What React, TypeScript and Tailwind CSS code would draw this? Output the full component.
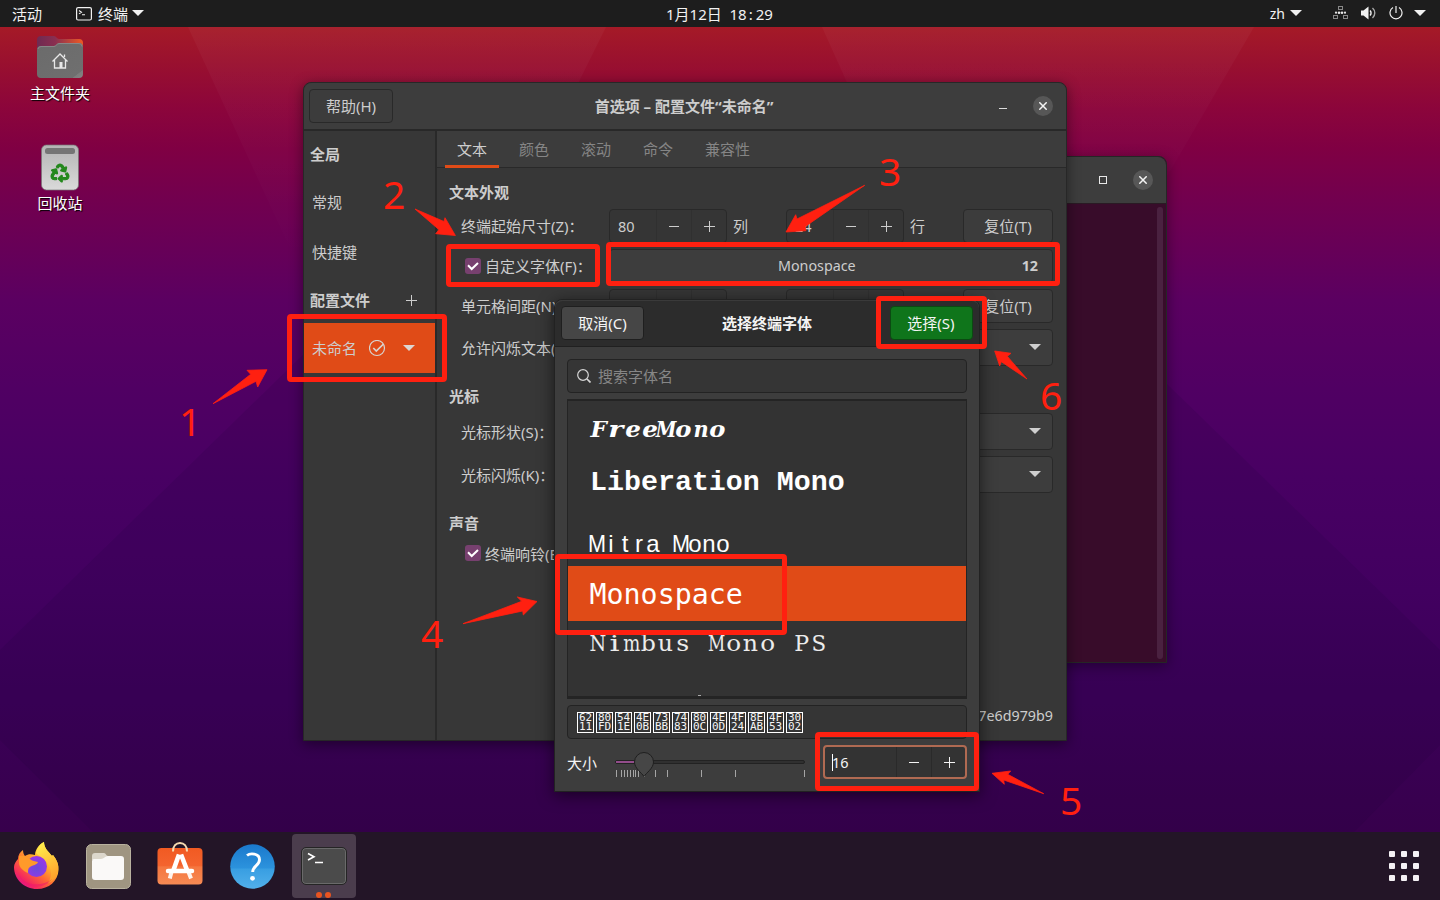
import React from "react";
import { FaRecycle } from "react-icons/fa";

const RED = "#ff2010";

function Caret({ color = "#f2f2f2" }: { color?: string }) {
  return (
    <svg width="12" height="6" viewBox="0 0 12 6" className="block shrink-0">
      <path d="M0 0h12L6 6z" fill={color} />
    </svg>
  );
}

function Wallpaper() {
  return (
    <svg width="1440" height="900" className="absolute left-0 top-0 block">
      <defs>
        <linearGradient id="wall" x1="0" y1="27" x2="0" y2="832" gradientUnits="userSpaceOnUse">
          <stop offset="0" stopColor="#a51a27" />
          <stop offset="0.05" stopColor="#980f30" />
          <stop offset="0.1" stopColor="#8c053b" />
          <stop offset="0.15" stopColor="#800043" />
          <stop offset="0.21" stopColor="#73004e" />
          <stop offset="0.27" stopColor="#680057" />
          <stop offset="0.34" stopColor="#5b0061" />
          <stop offset="0.45" stopColor="#500063" />
          <stop offset="0.56" stopColor="#480063" />
          <stop offset="0.7" stopColor="#420060" />
          <stop offset="0.84" stopColor="#3b0058" />
          <stop offset="1" stopColor="#37004c" />
        </linearGradient>
        <linearGradient id="glow" x1="0" y1="0" x2="0" y2="1">
          <stop offset="0" stopColor="#fff" stopOpacity="0.035" />
          <stop offset="1" stopColor="#fff" stopOpacity="0" />
        </linearGradient>
      </defs>
      <rect width="1440" height="900" fill="url(#wall)" />
      <path d="M188 27H606L540 160 300 270z" fill="url(#glow)" />
      <path d="M822 27H1254L1130 240 900 200z" fill="url(#glow)" />
      <path d="M0 650L310 348H1130L1440 650V745L1354 832H93L0 740z" fill="#100030" opacity="0.1" />
    </svg>
  );
}

function TopBar() {
  return (
    <header className="relative flex h-[27px] items-center justify-between bg-[#1d1d1d] pl-[12px] pr-[14px] text-[15px] leading-[27px] text-[#f2f2f2]">
      <div className="flex items-center">
        <span className="w-[64px] pt-px">活动</span>
        <svg width="16" height="14" viewBox="0 0 16 14" fill="none" stroke="#f2f2f2">
          <rect x="0.6" y="0.6" width="14.8" height="12.4" rx="1.5" strokeWidth="1.2" />
          <path d="M3 3.5l2.5 1.7L3 6.9M6 7.7h3" strokeWidth="1.1" />
        </svg>
        <span className="ml-[6px] mr-[4px] pt-px">终端</span>
        <span className="-mt-px">
          <Caret />
        </span>
      </div>
      <div className="flex items-center">
        <span className="mr-[5px] text-[14px]">zh</span>
        <span className="-mt-px mr-px">
          <Caret />
        </span>
        <svg className="-mt-px ml-[30px]" width="16" height="14" viewBox="0 0 16 14" fill="none">
          <g stroke="#888" strokeWidth="1">
            <rect x="5.5" y="0.5" width="4" height="3" />
            <rect x="0.5" y="9.5" width="4" height="3" />
            <rect x="10.5" y="9.5" width="4" height="3" />
          </g>
          <g fill="#e8e8e8">
            <circle cx="3" cy="6.7" r="1.1" />
            <circle cx="6" cy="6.7" r="1.3" />
            <circle cx="9" cy="6.7" r="1.3" />
            <circle cx="12" cy="6.7" r="1.1" />
          </g>
        </svg>
        <svg className="-mt-px ml-[12px]" width="16" height="14" viewBox="0 0 16 14" fill="none">
          <path d="M0 4.5h2.5L7.5 0.500v13L2.500 9.5H0z" fill="#f2f2f2" />
          <path d="M9 4.500a3.500 3.500 0 010 5" stroke="#f2f2f2" strokeWidth="1.400" />
          <path d="M11.500 2a6.600 6.600 0 010 10" stroke="#aaa" strokeWidth="1.400" />
        </svg>
        <svg className="-mt-[2px] ml-[12px] mr-px" width="14" height="14" viewBox="0 0 14 14" fill="none" stroke="#f2f2f2" strokeWidth="1.2">
          <path d="M4 1.6a6 6 0 106 0M7 0v7" />
        </svg>
        <span className="-mt-px ml-[10px]">
          <Caret />
        </span>
      </div>
      <span className="absolute left-[666px] top-px whitespace-pre text-[15px]">
        1月12日  18<span className="ml-[2px] mr-[3px]">:</span>29
      </span>
    </header>
  );
}

function DesktopIcons() {
  return (
    <div className="absolute left-0 top-[27px] w-[120px] text-[15px] leading-[20px] text-white [text-shadow:1px_1px_1px_#000]">
      <div className="flex h-[110px] flex-col items-center pt-[9px]">
        <svg width="46" height="43" viewBox="0 0 46 43">
          <defs>
            <linearGradient id="fold" x1="0" x2="1">
              <stop offset="0" stopColor="#6e2a52" />
              <stop offset="0.4" stopColor="#8a2f50" />
              <stop offset="1" stopColor="#ee5a24" />
            </linearGradient>
            <linearGradient id="foldf" x1="0" y1="0" x2="1" y2="1">
              <stop offset="0" stopColor="#6b6b6b" />
              <stop offset="0.88" stopColor="#6f6f6f" />
              <stop offset="0.89" stopColor="#7c7c7c" />
              <stop offset="1" stopColor="#858585" />
            </linearGradient>
          </defs>
          <path d="M0 14V4a4 4 0 014-4h13c2 0 3 3 5 3h20a4 4 0 014 4v9z" fill="url(#fold)" />
          <path d="M0 14a4 4 0 014-4h13c2 0 3-3 5-3h20a4 4 0 014 4v27a4 4 0 01-4 4H4a4 4 0 01-4-4z" fill="url(#foldf)" />
          <path d="M1 13a3 3 0 013-2.500h13c2 0 3-3 5-3h20a3 3 0 013 3" fill="none" stroke="#8e8e8e" strokeWidth="0.8" />
          <path d="M15.500 25.500l7.500-7.500 7.500 7.500M17.500 24v8h11v-8M27.500 21v-2.500" fill="none" stroke="#e8e8e8" strokeWidth="1.300" />
          <rect x="22.500" y="26" width="3" height="6" fill="#e8e8e8" />
        </svg>
        <span className="mt-[4px]">主文件夹</span>
      </div>
      <div className="flex flex-col items-center pt-[7px]">
        <div className="relative">
          <svg width="38" height="47" viewBox="0 0 38 47" className="block">
            <defs>
              <linearGradient id="bin" x1="0" y1="0" x2="0" y2="1">
                <stop offset="0" stopColor="#b4b4b4" />
                <stop offset="1" stopColor="#dadada" />
              </linearGradient>
            </defs>
            <rect x="0.500" y="1" width="37" height="45" rx="5" fill="url(#bin)" stroke="#777" strokeWidth="0.700" />
            <rect x="4" y="4" width="30" height="6" rx="2.500" fill="#757575" />
          </svg>
          <FaRecycle size={18} color="#24881d" stroke="#24881d" strokeWidth={34} className="absolute left-[10px] top-[20px] overflow-visible" />
        </div>
        <span className="mt-[2px]">回收站</span>
      </div>
    </div>
  );
}

function CloseIcon() {
  return (
    <span className="flex h-5 w-5 items-center justify-center rounded-full bg-[#575757]">
      <svg width="8" height="8" viewBox="0 0 8 8" stroke="#f4f4f4" strokeWidth="1.5">
        <path d="M0.300 0.300l7.400 7.400M7.700 0.300L0.300 7.700" />
      </svg>
    </span>
  );
}

function TerminalWindow() {
  return (
    <div className="absolute left-[440px] top-[156px] flex h-[507px] w-[727px] flex-col rounded-t-lg border border-[#262626] bg-[#380c2a] shadow-[0_3px_14px_rgba(0,0,0,0.4)]">
      <div className="flex h-[47px] shrink-0 items-center justify-end gap-[26px] rounded-t-lg border-b border-[#2a1a24] bg-[#3d3d3d] pr-[13px]">
        <span className="h-2 w-2 border border-[#e8e8e8]" />
        <CloseIcon />
      </div>
      <div className="flex flex-1 justify-end p-[3px]">
        <span className="h-[452px] w-[6px] rounded-full bg-[#4a2140]" />
      </div>
    </div>
  );
}

function Minus() {
  return <span className="h-px w-[10px] bg-current" />;
}

function Plus() {
  return (
    <svg width="11" height="11" viewBox="0 0 11 11" stroke="currentColor" className="block">
      <path d="M0 5.500h11M5.500 0v11" />
    </svg>
  );
}

function Spin({ value }: { value: string }) {
  return (
    <div className="flex h-[34px] w-[118px] shrink-0 rounded border border-[#292929] bg-[#353535]">
      <span className="flex-1 pl-2 text-[14.500px] leading-[32px]">{value}</span>
      <span className="flex w-[35px] items-center justify-center border-l border-[#303030]">
        <Minus />
      </span>
      <span className="flex w-[35px] items-center justify-center border-l border-[#303030]">
        <Plus />
      </span>
    </div>
  );
}

function SizeRow({ label, a, b, ua, ub }: { label: string; a: string; b: string; ua: string; ub: string }) {
  return (
    <div className="mb-[6px] flex h-[34px] items-center pl-3">
      <span className="w-[148px] shrink-0">{label}</span>
      <Spin value={a} />
      <span className="w-[59px] shrink-0 pl-[6px]">{ua}</span>
      <Spin value={b} />
      <span className="w-[59px] shrink-0 pl-[6px]">{ub}</span>
      <span className="flex h-[34px] w-[90px] shrink-0 items-center justify-center rounded border border-[#292929] bg-[#3c3c3c]">复位(T)</span>
    </div>
  );
}

function ComboRow({ label }: { label: string }) {
  return (
    <div className="flex h-[37px] items-center pl-3">
      <span className="w-[148px] shrink-0">{label}</span>
      <span className="flex h-[37px] w-[444px] items-center justify-end rounded border border-[#292929] bg-[#3d3d3d] pb-px pr-[11px]">
        <Caret color="#cfcfcf" />
      </span>
    </div>
  );
}

function Check() {
  return (
    <span className="mr-1 flex h-4 w-4 items-center justify-center rounded-[3px] bg-[#77406f]">
      <svg width="12" height="10" viewBox="0 0 12 10" fill="none" stroke="#fff" strokeWidth="2">
        <path d="M1 4.300l3.700 3.700L11 2" />
      </svg>
    </span>
  );
}

function PreferencesWindow() {
  const tabs = ["文本", "颜色", "滚动", "命令", "兼容性"];
  return (
    <div className="absolute left-[303px] top-[82px] flex h-[659px] w-[764px] flex-col rounded-t-lg border border-[#272727] bg-[#373737] text-[15px] leading-[22px] text-[#cdcdcd] shadow-[0_3px_14px_rgba(0,0,0,0.45)]">
      <div className="relative flex h-[48px] shrink-0 items-center justify-between rounded-t-lg border-b-2 border-[#282828] bg-[#3d3d3d] pl-[5px] pr-[13px]">
        <span className="flex h-[34px] w-[84px] items-center justify-center rounded border border-[#292929] bg-[#3c3c3c]">帮助(H)</span>
        <div className="flex items-center gap-[26px]">
          <span className="mt-[5px] h-px w-2 bg-[#dcdcdc]" />
          <CloseIcon />
        </div>
        <span className="absolute left-0 right-[2px] top-[12px] text-center font-bold">首选项 – 配置文件“未命名”</span>
      </div>
      <div className="flex min-h-0 flex-1">
        <aside className="flex w-[133px] shrink-0 flex-col border-r-2 border-[#292929]">
          <span className="mt-[12px] pl-[6px] font-bold">全局</span>
          <span className="mt-[26px] pl-[8px]">常规</span>
          <span className="mt-[28px] pl-[8px]">快捷键</span>
          <div className="mt-[26px] flex items-center justify-between pl-[6px] pr-[18px] font-bold">
            配置文件
            <Plus />
          </div>
          <div className="mt-[12px] flex h-[50px] items-center bg-[#e04b17] pl-[8px]">
            <span>未命名</span>
            <svg className="ml-[12px]" width="17" height="17" viewBox="0.500 0.500 17 17" fill="none" stroke="#d8d4d0">
              <circle cx="8.500" cy="8.500" r="7.500" strokeWidth="1.200" />
              <path d="M4.800 8.500l3 3L15 4.500" strokeWidth="1.700" />
            </svg>
            <span className="ml-[17px]">
              <Caret color="#dcd6d2" />
            </span>
          </div>
        </aside>
        <div className="flex flex-1 flex-col overflow-hidden">
          <nav className="flex h-[37px] shrink-0 border-b border-[#292929] bg-[#3c3c3c] pl-2">
            {tabs.map((t, i) => (
              <span
                key={t}
                className={
                  i === 0
                    ? "mr-2 h-[37px] border-b-[3px] border-[#e04b17] px-3 leading-[37px]"
                    : "mr-2 px-3 leading-[37px] text-[#858585]"
                }
              >
                {t}
              </span>
            ))}
          </nav>
          <div className="flex flex-1 flex-col pl-3">
            <h2 className="mb-[4px] mt-[12px] h-[25px] font-bold leading-[25px]">文本外观</h2>
            <SizeRow label="终端起始尺寸(Z)：" a="80" b="24" ua="列" ub="行" />
            <div className="mb-[6px] flex h-[34px] items-center pl-4">
              <div className="flex w-[144px] shrink-0 items-center">
                <Check />
                <span>自定义字体(F)：</span>
              </div>
              <div className="flex h-[34px] w-[444px] items-center rounded border border-[#292929] bg-[#3d3d3d] text-[14.300px]">
                <span className="flex-1 pl-[2px] text-center">Monospace</span>
                <span className="pr-[14px] font-bold">12</span>
              </div>
            </div>
            <SizeRow label="单元格间距(N)：" a="1.0" b="1.0" ua="宽" ub="高" />
            <ComboRow label="允许闪烁文本(B)：" />
            <h2 className="mb-[5px] mt-[18px] h-[24px] font-bold leading-[24px]">光标</h2>
            <ComboRow label="光标形状(S)：" />
            <div className="h-[6px]" />
            <ComboRow label="光标闪烁(K)：" />
            <h2 className="mb-[6px] mt-[18px] h-[24px] font-bold leading-[24px]">声音</h2>
            <div className="flex h-[24px] items-center pl-4">
              <Check />
              <span className="pt-px">终端响铃(B)</span>
            </div>
            <div className="mt-auto pb-[13px] pr-[13px] text-right text-[14.300px]">7e6d979b9</div>
          </div>
        </div>
      </div>
    </div>
  );
}

type Cell = [string, number];

const freeMono: Cell[] = [
  ["F", 1.05], ["r", 1.3], ["e", 1.12], ["e", 1.12], ["M", 0.85], ["o", 1.1], ["n", 0.95], ["o", 1.1],
];

const nimbusMono: Cell[] = [
  ["N", 0.85], ["i", 1.4], ["m", 0.8], ["b", 1.05], ["u", 1.05], ["s", 1.12], ["\u00a0", 1],
  ["M", 0.75], ["o", 1.1], ["n", 1.05], ["o", 1.1], ["\u00a0", 1], ["P", 0.98], ["S", 0.95],
];

function Cells({ cells }: { cells: Cell[] }) {
  return (
    <>
      {cells.map(([ch, sx], i) => (
        <span key={i} className="flex w-[17px] shrink-0 justify-center">
          <span className="block" style={{ transform: `scaleX(${sx})` }}>
            {ch}
          </span>
        </span>
      ))}
    </>
  );
}

function FontDialog() {
  const codes = ["6211", "80FD", "541E", "4E0B", "73BB", "7483", "800C", "4E0D", "4F24", "8EAB", "4F53", "3002"];
  const ticks = [1, 6, 9, 12, 15, 18, 20, 23, 29, 40, 52, 86, 120, 189];
  return (
    <div className="absolute left-[554px] top-[299px] flex h-[493px] w-[426px] flex-col rounded-t-lg border border-[#222] bg-[#3d3d3d] text-[15px] text-[#f4f4f4] shadow-[0_3px_16px_rgba(0,0,0,0.55)]">
      <div className="relative flex h-[47px] shrink-0 items-center justify-between rounded-t-lg border-b border-t border-b-[#202020] border-t-[#3a3a3a] bg-[#2c2c2c] pb-px pl-[6px] pr-[6px]">
        <span className="flex h-[34px] w-[83px] items-center justify-center rounded border border-[#1f1f1f] bg-[#464646]">取消(C)</span>
        <span className="font-bold">选择终端字体</span>
        <span className="flex h-[34px] w-[83px] items-center justify-center rounded border border-[#0b4a12] bg-[#0f751b] pr-px">选择(S)</span>
      </div>
      <div className="flex flex-1 flex-col px-[12px] pt-[12px]">
        <div className="flex h-[34px] shrink-0 items-center rounded border border-[#232323] bg-[#353535] pl-[9px] text-[#868686]">
          <svg width="14" height="14" viewBox="0 0 14 14" fill="none" stroke="#d6d6d6" strokeWidth="1.200">
            <circle cx="6" cy="6" r="5.300" />
            <path d="M10 10l3.500 3.500" strokeWidth="1.700" />
          </svg>
          <span className="ml-[7px]">搜索字体名</span>
        </div>
        <div className="mt-[6px] flex h-[300px] shrink-0 flex-col overflow-hidden border border-b-[3px] border-t-2 border-[#242424] bg-[#333] text-white">
          <div className="flex h-[52px] shrink-0 items-center pl-[22px] pt-[4px] font-['DejaVu_Serif'] text-[22px] font-bold italic">
            <Cells cells={freeMono} />
          </div>
          <div className="flex h-[56px] shrink-0 items-center whitespace-pre pl-[22px] pt-[2px] font-['Liberation_Mono'] text-[28.300px] font-bold">Liberation Mono</div>
          <div className="flex h-[57px] shrink-0 items-end pb-[8px] pl-[22px] font-['Liberation_Sans'] text-[24px] leading-[28px]">
            {"Mitra Mono".split("").map((c, i) => (
              <span key={i} className="flex w-[14px] shrink-0 justify-center whitespace-pre">
                <span className={c === "M" ? "block scale-x-90" : "block"}>{c}</span>
              </span>
            ))}
          </div>
          <div className="flex h-[55px] shrink-0 items-center bg-[#e04b17] pl-[21.500px] pt-[3px] font-['DejaVu_Sans_Mono'] text-[28.300px]">Monospace</div>
          <div className="flex h-[46px] shrink-0 items-center pl-[21px] font-['DejaVu_Serif'] text-[22.500px] text-[#ececec]">
            <Cells cells={nimbusMono} />
          </div>
          <span className="ml-[130px] mt-auto h-px w-[3px] bg-[#aaa]" />
        </div>
        <div className="mt-[6px] flex h-[34px] shrink-0 items-center gap-[2px] rounded border border-[#232323] bg-[#353535] pl-[9px]">
          {codes.map((c) => (
            <span
              key={c}
              className="flex h-[21px] w-[17px] flex-col items-center justify-center border border-white pb-px font-['DejaVu_Sans_Mono'] text-[11px] leading-[9px]"
            >
              <span>{c.slice(0, 2)}</span>
              <span>{c.slice(2)}</span>
            </span>
          ))}
        </div>
        <div className="mt-[6px] flex h-[34px] shrink-0 items-center">
          <span className="w-[48px] pt-[2px]">大小</span>
          <svg width="190" height="34" viewBox="0 0 190 34">
            <rect x="0.500" y="15.500" width="189" height="3" rx="1.500" fill="#303030" stroke="#222" />
            <rect x="1" y="16" width="22" height="2" fill="#924d8b" />
            {ticks.map((t) => (
              <rect key={t} x={t} y="25" width="1" height="7" fill="#a5a5a5" />
            ))}
            <path d="M29 31.500C27 28 19.500 23.500 19.500 17a9.500 9.500 0 0119 0c0 6.500-7.500 11-9.500 14.500z" fill="#464646" stroke="#1f1f1f" />
          </svg>
          <div className="ml-[18px] flex h-[34px] w-[144px] rounded border-2 border-[#b06a52] bg-[#333]">
            <span className="flex flex-1 items-center pl-[7px] text-[14.500px]">
              <span className="h-[17px] w-px bg-white" />
              <span className="-ml-px pt-[2px]">16</span>
            </span>
            <span className="flex w-[35px] items-center justify-center border-l border-[#2a2a2a] pt-px">
              <Minus />
            </span>
            <span className="flex w-[34px] items-center justify-center border-l border-[#2a2a2a] pl-px">
              <Plus />
            </span>
          </div>
        </div>
      </div>
    </div>
  );
}

function Dock() {
  return (
    <footer className="absolute left-0 top-[832px] flex h-[68px] w-[1440px] items-center justify-between bg-[#231527] pr-[21px]">
      <div className="flex h-full items-center">
        <div className="flex w-[72px] justify-center pl-[2px]">
          <svg width="46" height="47" viewBox="0 0 46 47" className="-mt-[2px]">
            <defs>
              <linearGradient id="ff1" x1="0.850" y1="0.100" x2="0.200" y2="0.950">
                <stop offset="0" stopColor="#fff04a" />
                <stop offset="0.350" stopColor="#ffb72a" />
                <stop offset="0.600" stopColor="#ff6a35" />
                <stop offset="0.850" stopColor="#f52b5c" />
                <stop offset="1" stopColor="#e0128a" />
              </linearGradient>
              <radialGradient id="ff2" cx="0.500" cy="0.600" r="0.600">
                <stop offset="0" stopColor="#6a4bdc" />
                <stop offset="1" stopColor="#9a36e8" />
              </radialGradient>
              <linearGradient id="ff3" x1="0" y1="0" x2="0.300" y2="1">
                <stop offset="0" stopColor="#fff44f" />
                <stop offset="1" stopColor="#ffa42c" />
              </linearGradient>
            </defs>
            <path d="M4 17C4 13 6 10 9 8c0 3 1 5 2 6 3-2 6-2 10-1 0-5 4-11 9-13 0 6 4 9 8 14l1-1c4 5 6 10 5.500 15C44 39 35 47 23 47 10 47 0 37 0 25c0-3 2-6 4-8z" fill="url(#ff1)" />
            <path d="M22 11c1-5 4-9 8-11 0 6 4 9 8 14l1-1c4 5 6 10 5 16-1 6-5 10-10 12 4-6 4-13 0-19-3-5-8-7-12-11z" fill="url(#ff3)" />
            <circle cx="22.500" cy="24.500" r="10.500" fill="url(#ff2)" />
            <path d="M5 14c5-.500 9 0 11 3 2 2 5 2 8 3-1 3-5 3-8 5-2 1-2 3-2 6-5-2-9-6-9-10z" fill="#ff9a2a" />
            <path d="M5 33c5 10 22 13 33 4-6 9-26 13-33-4z" fill="#f0146e" opacity="0.500" />
          </svg>
        </div>
        <div className="flex w-[72px] justify-center pl-[2px]">
          <svg width="46" height="45" viewBox="0 0 46 45">
            <rect x="0.500" y="0.500" width="44" height="44" rx="5" fill="#9f9581" stroke="#b9b29f" />
            <path d="M6 12a3 3 0 013-3h9c2 0 2 3 4 3v4H6z" fill="#dcd7cc" />
            <path d="M6 17a2 2 0 012-2h7c3 0 4-3 7-3h13a3 3 0 013 3v18a3 3 0 01-3 3H9a3 3 0 01-3-3z" fill="#faf9f8" />
          </svg>
        </div>
        <div className="flex w-[72px] justify-center">
          <svg width="46" height="44" viewBox="0 0 46 44" className="-mt-[4px]">
            <defs>
              <linearGradient id="bag" x1="0" y1="0" x2="0" y2="1">
                <stop offset="0" stopColor="#f15a22" />
                <stop offset="0.500" stopColor="#f4642f" />
                <stop offset="0.510" stopColor="#f5763f" />
                <stop offset="1" stopColor="#f68a54" />
              </linearGradient>
            </defs>
            <rect x="0.500" y="6" width="45" height="36.500" rx="4" fill="url(#bag)" />
            <path d="M16 9.500C16 4 19 1 23 1S30 4 30 9.500" fill="none" stroke="#f5d9b0" strokeWidth="2" />
            <g fill="none" stroke="#fff">
              <path d="M22 12.500L16.500 28M24 12.500l6 15.500" strokeWidth="4.600" />
              <path d="M11 29h24" strokeWidth="4.500" strokeLinecap="round" />
              <path d="M14.500 30L12.800 36.500M31.500 30l2.500 6.500" strokeWidth="4" opacity="0.9" />
            </g>
          </svg>
        </div>
        <div className="flex w-[72px] justify-center pl-[2px]">
          <svg width="46" height="45" viewBox="0 0 46 45">
            <defs>
              <linearGradient id="help" x1="0" y1="0" x2="0" y2="1">
                <stop offset="0" stopColor="#1a78cc" />
                <stop offset="0.540" stopColor="#2c93dd" />
                <stop offset="0.550" stopColor="#389ee2" />
                <stop offset="1" stopColor="#52b0ea" />
              </linearGradient>
            </defs>
            <circle cx="22.500" cy="22.500" r="22.300" fill="url(#help)" />
            <path d="M17 11.500c3-2.500 12.500-2.500 12.500 4.200 0 5.800-6.800 6-6.800 12.300" fill="none" stroke="#fff" strokeWidth="2.900" />
            <circle cx="22.500" cy="34.300" r="2.400" fill="#fff" />
          </svg>
        </div>
        <div className="ml-[4px] flex h-[64px] w-[64px] flex-col items-center rounded bg-[#4b3d4d] pt-[13px]">
          <div className="h-[38px] w-[46px] rounded-[5px] border border-[#252525] bg-[#4b4b4b] ring-1 ring-[#6a6a6a] ring-inset">
            <svg width="44" height="36" viewBox="0 0 44 36" fill="none" stroke="#fff" strokeWidth="1.600">
              <path d="M6 5.500l6 3.200L6 12M13 14.500h8" />
            </svg>
          </div>
          <div className="mt-[7px] flex gap-[3px] pr-px">
            <span className="h-[6px] w-[6px] rounded-full bg-[#e95420]" />
            <span className="h-[6px] w-[6px] rounded-full bg-[#e95420]" />
          </div>
        </div>
      </div>
      <div className="grid grid-cols-3 gap-[6px]">
        {Array.from({ length: 9 }, (_, i) => (
          <span key={i} className="h-[6px] w-[6px] rounded-[1px] bg-[#f4f0f4]" />
        ))}
      </div>
    </footer>
  );
}

function Annotations() {
  return (
    <div className="pointer-events-none absolute inset-0 text-[39px] leading-[40px] text-[#ff2010]">
      <div className="absolute left-[287px] top-[314px] h-[68px] w-[160px] rounded-[4px] border-5 border-[#ff2010]" />
      <div className="absolute left-[446px] top-[244px] h-[43px] w-[154px] rounded-[4px] border-5 border-[#ff2010]" />
      <div className="absolute left-[606px] top-[242px] h-[44px] w-[454px] rounded-[4px] border-5 border-[#ff2010]" />
      <div className="absolute left-[876px] top-[296px] h-[53px] w-[111px] rounded-[4px] border-5 border-[#ff2010]" />
      <div className="absolute left-[555px] top-[554px] h-[81px] w-[232px] rounded-[4px] border-5 border-[#ff2010]" />
      <div className="absolute left-[815px] top-[732px] h-[59px] w-[164px] rounded-[4px] border-5 border-[#ff2010]" />
      <svg width="1440" height="900" className="absolute left-0 top-0" fill={RED} stroke={RED} strokeWidth="0.800" strokeLinejoin="round">
        <path d="M213 403.700L250.700 374.300 247 370.300 267 369.700 257.700 387 256 381.300z" />
        <path d="M415 209L444 221.500 445 217.700 455.400 235.500 435.700 233.700 439 229.700z" />
        <path d="M864.700 185.300L797 219 795.700 214.700 786 232 806 230.700 805 226.700z" />
        <path d="M463 623.700L521.700 601.300 517.300 597 537 601.500 523.300 615 522.700 611z" />
        <path d="M1043.700 793.700L1007.700 774.300 1010.700 771 992 773.300 1004.300 784.300 1003.700 780z" />
        <path d="M1027 379L1007.300 356.300 1011 353.300 994.700 351 999.700 366 1001.300 361.700z" />
      </svg>
      <span className="absolute left-[179px] top-[401px]">1</span>
      <span className="absolute left-[383px] top-[174px]">2</span>
      <span className="absolute left-[879px] top-[151px]">3</span>
      <span className="absolute left-[421px] top-[613px]">4</span>
      <span className="absolute left-[1060px] top-[780px]">5</span>
      <span className="absolute left-[1040px] top-[375px]">6</span>
    </div>
  );
}

export default function App() {
  return (
    <div className="relative h-[900px] w-[1440px] overflow-hidden font-['Noto_Sans','Noto_Sans_CJK_SC',sans-serif]">
      <Wallpaper />
      <TopBar />
      <DesktopIcons />
      <TerminalWindow />
      <PreferencesWindow />
      <FontDialog />
      <Dock />
      <Annotations />
    </div>
  );
}
